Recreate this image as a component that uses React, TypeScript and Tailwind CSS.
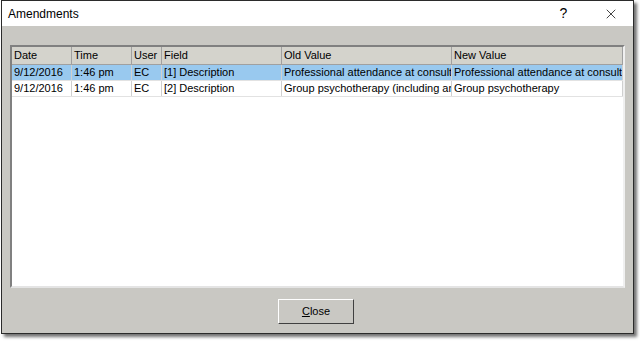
import { X } from "lucide-react";

const cols = [
  { name: "Date", w: "w-[60px]" },
  { name: "Time", w: "w-[60px]" },
  { name: "User", w: "w-[30px]" },
  { name: "Field", w: "w-[120px]" },
  { name: "Old Value", w: "w-[170px]" },
  { name: "New Value", w: "flex-1" },
];

const rows = [
  ["9/12/2016", "1:46 pm", "EC", "[1] Description", "Professional attendance at consultation", "Professional attendance at consultation"],
  ["9/12/2016", "1:46 pm", "EC", "[2] Description", "Group psychotherapy (including an", "Group psychotherapy"],
];

export default function App() {
  return (
    <div className="w-[640px] h-[342px] bg-white font-['Liberation_Sans',Arial,sans-serif] text-black">
      <div className="ml-[1px] w-[633px] h-[334px] border border-[#2b2b2b] bg-[#c9c8c3] flex flex-col shadow-[3px_3px_3px_rgba(0,0,0,0.55)]">
        <div className="h-[25px] bg-white flex items-center pl-[6px] text-[12px]">
          <span className="flex-1">Amendments</span>
          <span className="w-[45px] text-center text-[14px] mr-[2px]">?</span>
          <span className="w-[45px] flex justify-center">
            <X size={16} strokeWidth={1.1} />
          </span>
        </div>
        <div className="flex-1 flex flex-col px-[8px] pt-[19px] pb-[9px]">
          <div className="h-[243px] border-2 border-t-[#808080] border-l-[#808080] border-r-[#f0f0f0] border-b-[#e4e4e4] bg-white flex flex-col text-[11px]">
            <div className="flex h-[18px] bg-[#d4d3cc] border-b border-[#a0a0a0]">
              {cols.map((c) => (
                <div key={c.name} className={`${c.w} shrink-0 border-r border-[#a0a0a0] pl-[2px] leading-[17px] overflow-hidden whitespace-nowrap`}>
                  {c.name}
                </div>
              ))}
            </div>
            {rows.map((r, i) => (
              <div key={i} className={`flex h-[16px] border-b border-[#e2e2e2] ${i === 0 ? "bg-[#99c9ef]" : "bg-white"}`}>
                {r.map((v, j) => (
                  <div key={j} className={`${cols[j].w} shrink-0 border-r border-[#d0d0d0] pl-[2px] leading-[15px] overflow-hidden whitespace-nowrap`}>
                    {v}
                  </div>
                ))}
              </div>
            ))}
          </div>
          <div className="flex-1 flex items-end justify-center">
            <button className="w-[76px] h-[25px] ml-[-3px] border border-t-white border-l-white border-r-[#404040] border-b-[#404040] bg-[#c9c8c3] text-[11px]">
              <span className="underline">C</span>lose
            </button>
          </div>
        </div>
      </div>
    </div>
  );
}
